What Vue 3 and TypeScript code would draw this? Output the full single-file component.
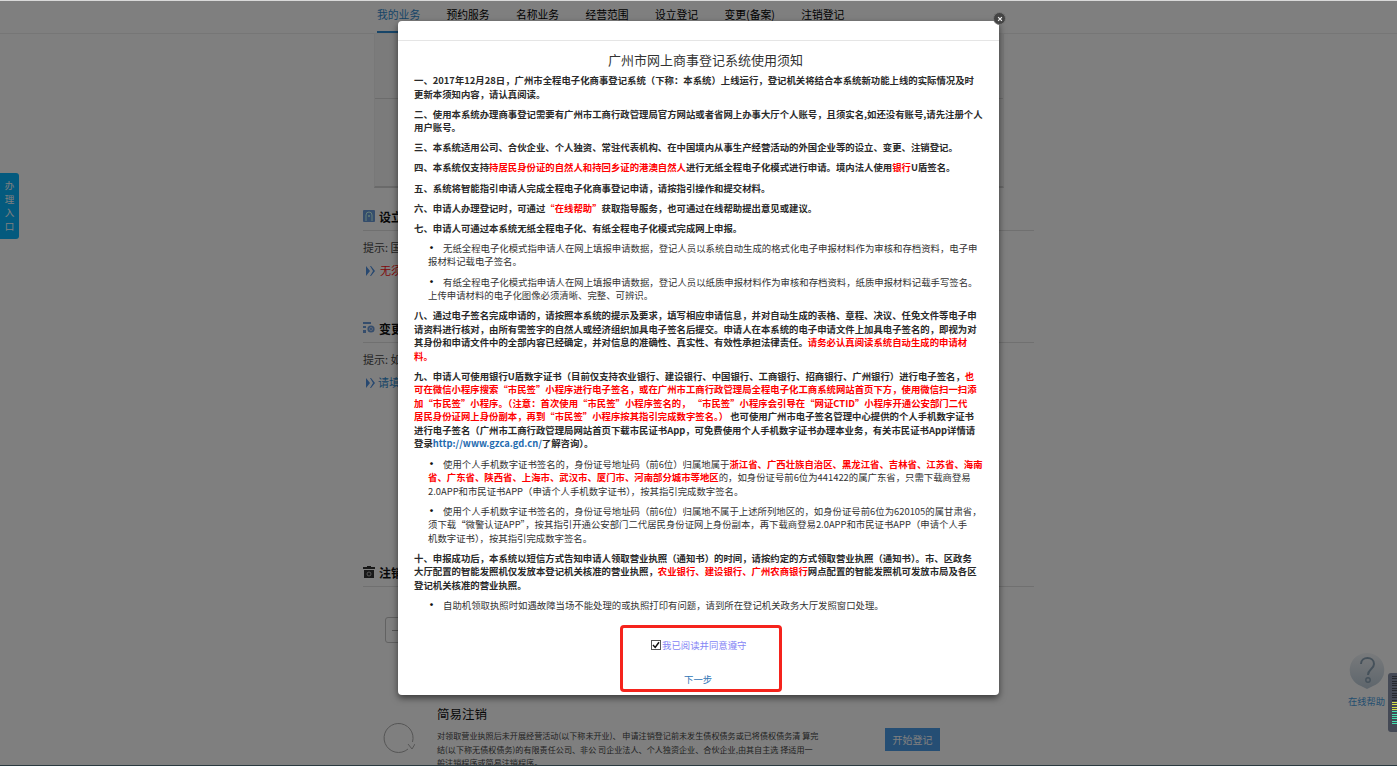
<script setup lang="ts">
const tabs: string[] = ['我的业务', '预约服务', '名称业务', '经营范围', '设立登记', '变更(备案)', '注销登记']
const entry: string[] = ['办', '理', '入', '口']
const meter: number[] = Array.from({ length: 21 }, (_, i) => i)
function meterColor(i: number): string {
  if (i < 11) return '#26292f'
  if (i < 15) return '#d6e04a'
  return '#45e0b0'
}
</script>

<template>
  <div class="page">
    <header class="topbar">
      <nav class="tabs">
        <a v-for="(t, i) in tabs" :key="t" class="tab" :class="{ active: i === 0 }">{{ t }}</a>
      </nav>
    </header>

    <main class="main">
      <div class="panel"><div class="panel-line"></div></div>

      <section class="sec sec1">
        <h3 class="sec-title">
          <svg class="sec-ico" viewBox="0 0 12 12"><rect width="12" height="12" rx="1" fill="#6a9ad8" /><path d="M3 11V5a3 3 0 0 1 6 0v6" fill="none" stroke="#cfe" stroke-width="1" /><circle cx="6" cy="6" r="1" fill="#cfe" /></svg>
          设立
        </h3>
        <p class="tip">提示: 国</p>
        <p class="lnk red"><svg class="arrow" viewBox="0 0 9 10"><path d="M0 0l4 5-4 5zM4 0h1l4 5-4 5H4l3-5z" fill="#4f90e0" /></svg><span>无须</span></p>
      </section>

      <section class="sec sec2">
        <h3 class="sec-title">
          <svg class="sec-ico" viewBox="0 0 12 12"><path d="M0 0h8v2H0zM0 4h3v2H0zM0 8h3v3H0z" fill="#6a9ad8" /><circle cx="8" cy="7" r="3.6" fill="#6a9ad8" /><circle cx="8" cy="7" r="1.6" fill="none" stroke="#dde" stroke-width=".7" /></svg>
          变更
        </h3>
        <p class="tip">提示: 如</p>
        <p class="lnk blue"><svg class="arrow" viewBox="0 0 9 10"><path d="M0 0l4 5-4 5zM4 0h1l4 5-4 5H4l3-5z" fill="#4f90e0" /></svg><span>请填</span></p>
      </section>

      <section class="sec sec3">
        <h3 class="sec-title">
          <svg class="sec-ico" viewBox="0 0 12 12"><path d="M4 0h4v1h4v2H0V1h4zM1 4h10v8H1z" fill="#333" /><circle cx="6" cy="8" r="2" fill="none" stroke="#ccc" stroke-width=".8" /></svg>
          注销
        </h3>
        <div class="minus-box"><span class="minus"></span></div>
      </section>

      <section class="simple">
        <svg class="loop" viewBox="0 0 32 32"><path d="M25 26A14.5 14.5 0 1 1 29.5 19" fill="none" stroke="#aaa" stroke-width="1" /><path d="M25 21l4 5 3-5" fill="none" stroke="#aaa" stroke-width="1" /></svg>
        <div class="simple-body">
          <h4 class="simple-title">简易注销</h4>
          <p class="simple-text">对领取营业执照后未开展经营活动(以下称未开业)、 申请注销登记前未发生债权债务或已将债权债务清 算完<br />结(以下称无债权债务)的有限责任公司、非公 司企业法人、个人独资企业、合伙企业,由其自主选 择适用一<br />般注销程序或简易注销程序。</p>
        </div>
        <button class="start" type="button">开始登记</button>
      </section>
    </main>

    <div class="entry"><span v-for="c in entry" :key="c">{{ c }}</span></div>

    <div class="help">
      <svg class="help-ico" viewBox="0 0 36 38">
        <defs><linearGradient id="hg" x1="0" y1="0" x2="0" y2="1"><stop offset="0" stop-color="#f2f5f8" /><stop offset="1" stop-color="#bccbd8" /></linearGradient></defs>
        <path d="M18 1a17 17 0 0 1 6 33l-6 3-6-3A17 17 0 0 1 18 1z" fill="url(#hg)" />
        <path d="M12 12c0-8 13-8 13 0 0 5-6 5-6 11" fill="none" stroke="#8ba2b5" stroke-width="2" />
        <circle cx="19" cy="28" r="2.2" fill="none" stroke="#8ba2b5" stroke-width="1.4" />
      </svg>
      <span>在线帮助</span>
    </div>

    <div class="overlay"></div>

    <div class="meter">
      <i v-for="i in meter" :key="i" :style="{ background: meterColor(i) }"></i>
    </div>

    <div class="modal">
      <div class="modal-head"></div>
      <h2 class="modal-title">广州市网上商事登记系统使用须知</h2>
      <div class="notice">
        <p>一、2017年12月28日，广州市全程电子化商事登记系统（下称：本系统）上线运行，登记机关将结合本系统新功能上线的实际情况及时<br />更新本须知内容，请认真阅读。</p>
        <p>二、使用本系统办理商事登记需要有广州市工商行政管理局官方网站或者省网上办事大厅个人账号，且须实名,如还没有账号,请先注册个人<br />用户账号。</p>
        <p>三、本系统适用公司、合伙企业、个人独资、常驻代表机构、在中国境内从事生产经营活动的外国企业等的设立、变更、注销登记。</p>
        <p>四、本系统仅支持<b>持居民身份证的自然人和持回乡证的港澳自然人</b>进行无纸全程电子化模式进行申请。境内法人使用<b>银行</b>U盾签名。</p>
        <p>五、系统将智能指引申请人完成全程电子化商事登记申请，请按指引操作和提交材料。</p>
        <p>六、申请人办理登记时，可通过<b>“在线帮助”</b>获取指导服务，也可通过在线帮助提出意见或建议。</p>
        <p>七、申请人可通过本系统无纸全程电子化、有纸全程电子化模式完成网上申报。</p>
        <p class="li"><i>•</i>无纸全程电子化模式指申请人在网上填报申请数据，登记人员以系统自动生成的格式化电子申报材料作为审核和存档资料，电子申<br />报材料记载电子签名。</p>
        <p class="li"><i>•</i>有纸全程电子化模式指申请人在网上填报申请数据，登记人员以纸质申报材料作为审核和存档资料，纸质申报材料记载手写签名。<br />上传申请材料的电子化图像必须清晰、完整、可辨识。</p>
        <p>八、通过电子签名完成申请的，请按照本系统的提示及要求，填写相应申请信息，并对自动生成的表格、章程、决议、任免文件等电子申<br />请资料进行核对，由所有需签字的自然人或经济组织加具电子签名后提交。申请人在本系统的电子申请文件上加具电子签名的，即视为对<br />其身份和申请文件中的全部内容已经确定，并对信息的准确性、真实性、有效性承担法律责任。<b>请务必认真阅读系统自动生成的申请材<br />料。</b></p>
        <p>九、申请人可使用银行U盾数字证书（目前仅支持农业银行、建设银行、中国银行、工商银行、招商银行、广州银行）进行电子签名，<b>也<br />可在微信小程序搜索“市民签”小程序进行电子签名，或在广州市工商行政管理局全程电子化工商系统网站首页下方，使用微信扫一扫添<br />加“市民签”小程序。（注意：首次使用“市民签”小程序签名的， “市民签”小程序会引导在“网证CTID”小程序开通公安部门二代<br />居民身份证网上身份副本，再到“市民签”小程序按其指引完成数字签名。）</b> 也可使用广州市电子签名管理中心提供的个人手机数字证书<br />进行电子签名（广州市工商行政管理局网站首页下载市民证书App，可免费使用个人手机数字证书办理本业务，有关市民证书App详情请<br />登录<a class="url">http://www.gzca.gd.cn/</a>了解咨询）。</p>
        <p class="li"><i>•</i>使用个人手机数字证书签名的，身份证号地址码（前6位）归属地属于<b>浙江省、广西壮族自治区、黑龙江省、吉林省、江苏省、海南<br />省、广东省、陕西省、上海市、武汉市、厦门市、河南部分城市等地区</b>的，如身份证号前6位为441422的属广东省，只需下载商登易<br />2.0APP和市民证书APP（申请个人手机数字证书），按其指引完成数字签名。</p>
        <p class="li"><i>•</i>使用个人手机数字证书签名的，身份证号地址码（前6位）归属地不属于上述所列地区的，如身份证号前6位为620105的属甘肃省，<br />须下载“微警认证APP”，按其指引开通公安部门二代居民身份证网上身份副本，再下载商登易2.0APP和市民证书APP（申请个人手<br />机数字证书），按其指引完成数字签名。</p>
        <p>十、申报成功后，本系统以短信方式告知申请人领取营业执照（通知书）的时间，请按约定的方式领取营业执照（通知书）。市、区政务<br />大厅配置的智能发照机仅发放本登记机关核准的营业执照，<b>农业银行、建设银行、广州农商银行</b>网点配置的智能发照机可发放市局及各区<br />登记机关核准的营业执照。</p>
        <p class="li"><i>•</i>自助机领取执照时如遇故障当场不能处理的或执照打印有问题，请到所在登记机关政务大厅发照窗口处理。</p>
      </div>

      <div class="agree-box">
        <label class="agree">
          <svg class="check" viewBox="0 0 10 10"><rect x=".5" y=".5" width="9" height="9" fill="#fff" stroke="#555" /><path d="M2 5l2.2 2.4L8 2.2" fill="none" stroke="#111" stroke-width="1.5" /></svg>
          <span>我已阅读并同意遵守</span>
        </label>
        <a class="next">下一步</a>
      </div>

      <button class="close" type="button" aria-label="关闭">
        <svg viewBox="0 0 8 8"><path d="M1.5 1.5l5 5M6.5 1.5l-5 5" stroke="#f2f2f2" stroke-width="1.6" /></svg>
      </button>
    </div>
  </div>
</template>

<style>
html, body { margin: 0; padding: 0; overflow: hidden; }
</style>

<style scoped>
.page {
  position: relative;
  width: 1397px;
  height: 766px;
  overflow: hidden;
  background: #fff;
  font-family: "Noto Sans CJK SC", "Liberation Sans", sans-serif;
  color: #333;
  box-sizing: border-box;
}
.topbar {
  height: 33px;
  border-bottom: 1px solid #ececec;
  box-sizing: content-box;
  padding-left: 377px;
}
.tabs { display: flex; gap: 26.3px; height: 33px; }
.tab {
  font-size: 10.8px;
  line-height: 29px;
  height: 33px;
  box-sizing: border-box;
  color: #000;
  white-space: nowrap;
}
.tab.active { color: #2f8ad0; border-bottom: 2px solid #2f8ad0; }
.main { margin-left: 363px; width: 671px; }
.panel {
  margin: -1px 30px 0 11px;
  height: 155px;
  border: 1px solid #f0f0f0;
  border-bottom: 2px solid #d4d4d4;
  background: #f6f6f6;
  box-sizing: border-box;
  padding-top: 64px;
}
.panel-line { border-top: 1px solid #d8d8d8; }
.sec-title {
  margin: 0;
  display: flex;
  align-items: center;
  gap: 4px;
  height: 28px;
  font-size: 12px;
  font-weight: 700;
  color: #111;
  border-bottom: 1px solid #e0e0e0;
}
.sec-ico { width: 12px; height: 12px; }
.sec1 { margin-top: 14px; height: 112px; }
.sec2 { height: 244px; }
.sec3 { height: 148px; }
.tip { margin: 9px 0 0; font-size: 11px; line-height: 15px; color: #444; }
.lnk { margin: 8px 0 0 3px; font-size: 11px; line-height: 15px; display: flex; align-items: center; gap: 5px; }
.lnk.red { color: #ff1010; }
.lnk.blue { color: #2f8ad0; gap: 3px; }
.arrow { width: 9px; height: 10px; }
.minus-box {
  margin: 30px 0 0 22px;
  width: 30px;
  height: 26px;
  border: 1px solid #c4c4c4;
  border-radius: 3px;
  display: flex;
  align-items: center;
  padding-left: 6px;
  box-sizing: border-box;
}
.minus { width: 10px; height: 1px; background: #aaa; }
.simple { display: flex; align-items: flex-start; }
.loop { width: 32px; height: 32px; margin: 17px 0 0 20px; flex: none; }
.simple-body { margin-left: 22px; width: 400px; flex: none; }
.simple-title { margin: 0; font-size: 12.5px; line-height: 16px; font-weight: 400; color: #111; }
.simple-text { margin: 7px 0 0; font-size: 8.1px; line-height: 13.5px; color: #444; white-space: nowrap; }
.start {
  margin: 22px 0 0 48px;
  width: 55px;
  height: 23px;
  border: 0;
  padding: 0;
  background: #4a9ce8;
  color: #fff;
  font: 10px "Noto Sans CJK SC", sans-serif;
  flex: none;
}
.entry {
  position: absolute;
  left: 0;
  top: 173px;
  width: 19px;
  height: 66px;
  background: #08b4fc;
  border-radius: 0 3px 3px 0;
  display: flex;
  flex-direction: column;
  align-items: center;
  justify-content: center;
  color: #fff;
  font-size: 9.5px;
  line-height: 13.5px;
}
.help {
  position: absolute;
  left: 1348px;
  top: 652px;
  width: 37px;
  display: flex;
  flex-direction: column;
  align-items: center;
  color: #4a9ee0;
  font-size: 9.3px;
  white-space: nowrap;
}
.help-ico { width: 36px; height: 38px; margin-bottom: 4px; }
.help span { line-height: 14px; }
.meter {
  position: absolute;
  left: 1388px;
  top: 673px;
  width: 9px;
  height: 59px;
  background: #444955;
  border-radius: 3px 0 0 3px;
  display: flex;
  flex-direction: column;
  gap: 1.36px;
  padding: 3px 0 0 4px;
  box-sizing: border-box;
}
.meter i { display: block; height: 1px; flex: none; }
.overlay {
  position: absolute;
  inset: 0;
  background: rgba(0, 0, 0, 0.5);
  border-top: 1px solid rgba(255, 255, 255, 0.7);
  border-bottom: 1px solid #2a3a40;
  box-sizing: border-box;
}
.modal {
  position: absolute;
  left: 398px;
  top: 21px;
  width: 601px;
  height: 674px;
  background: #fff;
  border-radius: 4px;
  box-shadow: 0 3px 7px rgba(0, 0, 0, 0.55);
  display: flex;
  flex-direction: column;
}
.modal-head { height: 19px; border-bottom: 1px solid #e5e5e5; flex: none; }
.modal-title {
  margin: 10px 0 0 14px;
  font-size: 13px;
  line-height: 18px;
  font-weight: 400;
  color: #333;
  text-align: center;
}
.notice {
  margin: 5px 0 0 16px;
  width: 572px;
  font-size: 9.4px;
  line-height: 13.5px;
  color: #2a2a2a;
  font-weight: 700;
  white-space: nowrap;
}
.notice p { margin: 0 0 6.65px; }
.notice b { color: #f00; font-weight: 700; }
.notice .li { padding-left: 14px; font-weight: 400; color: #333; }
.notice .li i { display: inline-block; width: 15px; margin-left: -2px; margin-right: 2px; font-style: normal; font-size: 11px; line-height: 1; font-weight: 700; color: #111; }
.url { color: #1f6bb0; font-weight: 700; }
.agree-box {
  position: absolute;
  left: 222px;
  top: 604px;
  width: 162px;
  height: 67px;
  border: 3px solid #f5231c;
  border-radius: 4px;
  box-sizing: border-box;
}
.agree {
  position: absolute;
  left: 28px;
  top: 10px;
  display: flex;
  align-items: center;
  gap: 1px;
  font-size: 9.4px;
  line-height: 14px;
  color: #8585f5;
  white-space: nowrap;
}
.check { width: 10px; height: 10px; flex: none; }
.next {
  position: absolute;
  left: 61px;
  top: 44px;
  font-size: 9.4px;
  line-height: 14px;
  color: #2f74b5;
  white-space: nowrap;
}
.close {
  position: absolute;
  right: -7px;
  top: -9px;
  width: 13px;
  height: 13px;
  padding: 2.5px;
  border: 1px solid #777;
  border-radius: 50%;
  background: #444;
  box-sizing: border-box;
  display: flex;
}
.close svg { width: 100%; height: 100%; }
</style>
